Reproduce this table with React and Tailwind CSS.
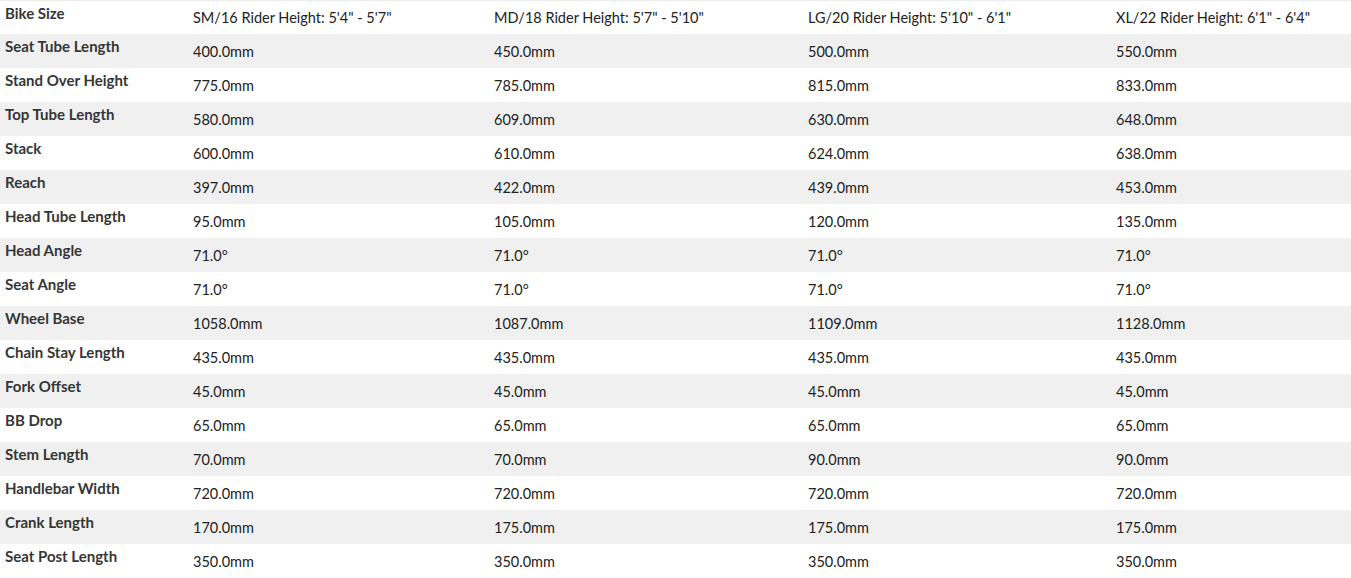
import React from "react";

const header = [
  "SM/16 Rider Height: 5'4\" - 5'7\"",
  "MD/18 Rider Height: 5'7\" - 5'10\"",
  "LG/20 Rider Height: 5'10\" - 6'1\"",
  "XL/22 Rider Height: 6'1\" - 6'4\"",
];

const rows = [
  ["Seat Tube Length", "400.0mm", "450.0mm", "500.0mm", "550.0mm"],
  ["Stand Over Height", "775.0mm", "785.0mm", "815.0mm", "833.0mm"],
  ["Top Tube Length", "580.0mm", "609.0mm", "630.0mm", "648.0mm"],
  ["Stack", "600.0mm", "610.0mm", "624.0mm", "638.0mm"],
  ["Reach", "397.0mm", "422.0mm", "439.0mm", "453.0mm"],
  ["Head Tube Length", "95.0mm", "105.0mm", "120.0mm", "135.0mm"],
  ["Head Angle", "71.0°", "71.0°", "71.0°", "71.0°"],
  ["Seat Angle", "71.0°", "71.0°", "71.0°", "71.0°"],
  ["Wheel Base", "1058.0mm", "1087.0mm", "1109.0mm", "1128.0mm"],
  ["Chain Stay Length", "435.0mm", "435.0mm", "435.0mm", "435.0mm"],
  ["Fork Offset", "45.0mm", "45.0mm", "45.0mm", "45.0mm"],
  ["BB Drop", "65.0mm", "65.0mm", "65.0mm", "65.0mm"],
  ["Stem Length", "70.0mm", "70.0mm", "90.0mm", "90.0mm"],
  ["Handlebar Width", "720.0mm", "720.0mm", "720.0mm", "720.0mm"],
  ["Crank Length", "170.0mm", "175.0mm", "175.0mm", "175.0mm"],
  ["Seat Post Length", "350.0mm", "350.0mm", "350.0mm", "350.0mm"],
];

const widths = ["w-[188px]", "w-[301px]", "w-[314px]", "w-[308px]", "flex-1"];

function Row({ cells, gray, first }) {
  return (
    <div
      className={`flex h-[34px] ${gray ? "bg-[#f0f0f0]" : "bg-white"} ${
        first ? "border-t border-[#ececec]" : ""
      }`}
    >
      <div
        className={`${widths[0]} pl-[5px] pt-[2px] text-[15px] font-bold text-[#363636] leading-[20px] whitespace-nowrap`}
      >
        {cells[0]}
      </div>
      {cells.slice(1).map((c, i) => (
        <div
          key={i}
          className={`${widths[i + 1]} pl-[5px] ${first ? "pt-[7px]" : "pt-[8px]"} text-[14.5px] text-[#222] leading-[20px] whitespace-nowrap`}
        >
          {c}
        </div>
      ))}
    </div>
  );
}

export default function App() {
  return (
    <div
      className="w-[1351px] bg-white"
      style={{ fontFamily: "Lato, 'Open Sans', sans-serif" }}
    >
      <Row cells={["Bike Size", ...header]} first />
      {rows.map((r, i) => (
        <Row key={i} cells={r} gray={i % 2 === 0} />
      ))}
    </div>
  );
}
